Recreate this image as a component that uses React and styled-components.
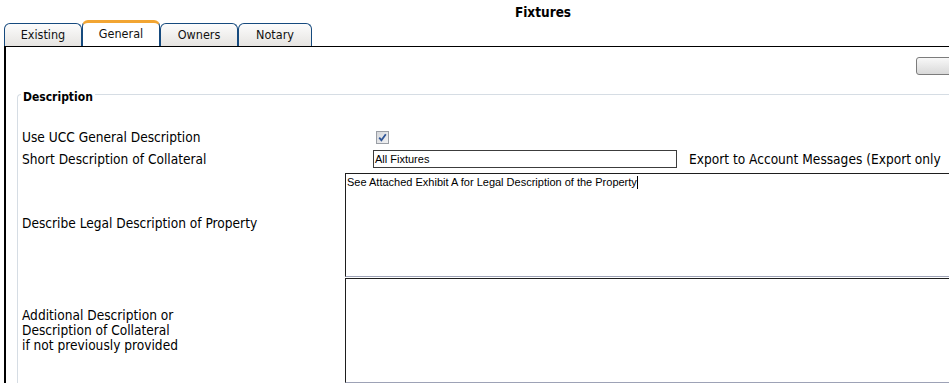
import React from 'react';
import styled, { createGlobalStyle } from 'styled-components';

const GlobalStyle = createGlobalStyle`
  html, body { margin: 0; padding: 0; background: #fff; overflow: hidden; }
  body {
    font-family: "DejaVu Sans Condensed", "DejaVu Sans", sans-serif;
    font-stretch: semi-condensed;
    color: #000;
  }
`;

const Page = styled.div`
  width: 1086px;
`;

const Title = styled.h1`
  margin: 0;
  height: 20px;
  line-height: 24px;
  text-align: center;
  font-size: 13.5px;
  font-weight: bold;
  color: #000;
`;

const TabBar = styled.div`
  display: flex;
  align-items: flex-end;
  height: 26px;
  padding-left: 4px;
`;

const Tab = styled.div`
  box-sizing: border-box;
  width: ${(p) => p.$w}px;
  height: ${(p) => (p.$active ? 26 : 23)}px;
  padding-bottom: 2px;
  border: 1px solid #164a7e;
  border-bottom: none;
  border-top: ${(p) => (p.$active ? '3px solid #f2a532' : '1px solid #164a7e')};
  border-radius: 6px 6px 0 0;
  background: ${(p) => (p.$active ? '#fff' : 'linear-gradient(#fcfcfc, #e6e4e1)')};
  font-size: 12.5px;
  display: flex;
  align-items: center;
  justify-content: center;
  color: #111;
`;

const Panel = styled.div`
  margin-left: 4px;
  border-top: 1px solid #000;
  border-left: 2px solid #000;
  padding: 10px 0 0 11px;
`;

const Toolbar = styled.div`
  display: flex;
  justify-content: flex-end;
  padding-right: 90px;
  margin-bottom: 9px;
`;

const Button = styled.button`
  box-sizing: border-box;
  width: 80px;
  height: 18px;
  border: 1px solid #7c7c7c;
  border-radius: 3px;
  background: linear-gradient(#f8f8f8, #d9d9d9);
  padding: 0;
`;

const Fieldset = styled.fieldset`
  margin: 0;
  padding: 22px 0 0 4px;
  border: 1px solid #d6dde4;
  border-right: none;
  border-bottom: none;
  border-radius: 4px 0 0 0;
  min-width: 0;
`;

const Legend = styled.legend`
  margin-left: -1px;
  padding: 6px 2px 0;
  font-size: 12px;
  font-weight: bold;
  color: #000;
`;

const FormGrid = styled.div`
  display: grid;
  grid-template-columns: 323px 1fr;
  align-items: center;
`;

const Label = styled.div`
  font-size: 13.6px;
  line-height: 15px;
  color: #000;
`;

const Field = styled.div`
  display: flex;
  align-items: center;
  min-height: 22px;
  padding-left: ${(p) => p.$ml || 0}px;
  padding-top: ${(p) => p.$mt || 0}px;
`;

const CheckBox = styled.span`
  box-sizing: border-box;
  width: 13px;
  height: 13px;
  border: 1px solid #9a9ea5;
  background: linear-gradient(135deg, #d5d7db, #f2f2f3);
  display: flex;
  align-items: center;
  justify-content: center;
`;

const TextInput = styled.div`
  box-sizing: border-box;
  width: 304px;
  height: 18px;
  border: 1px solid #3c3c3c;
  padding: 0 1px;
  font-family: "Liberation Sans", Arial, sans-serif;
  font-size: 11px;
  line-height: 16px;
  color: #000;
`;

const Note = styled.span`
  margin-left: 12px;
  font-size: 13.6px;
  white-space: nowrap;
`;

const TextArea = styled.div`
  box-sizing: border-box;
  width: 700px;
  height: ${(p) => p.$h}px;
  border: 1px solid #1e1e1e;
  border-bottom-color: #9da2b6;
  padding: 2px 1px;
  font-family: "Liberation Sans", Arial, sans-serif;
  font-size: 11px;
  line-height: 13px;
  color: #000;
`;

const Caret = styled.span`
  display: inline-block;
  width: 0;
  height: 13px;
  border-left: 1px solid #000;
  vertical-align: top;
`;

export default function App() {
  return (
    <Page>
      <GlobalStyle />
      <Title>Fixtures</Title>
      <TabBar>
        <Tab $w={78}>Existing</Tab>
        <Tab $w={78} $active>General</Tab>
        <Tab $w={78}>Owners</Tab>
        <Tab $w={74}>Notary</Tab>
      </TabBar>
      <Panel>
        <Toolbar>
          <Button aria-label="action" />
        </Toolbar>
        <Fieldset>
          <Legend>Description</Legend>
          <FormGrid>
            <Label>Use UCC General Description</Label>
            <Field $ml={31}>
              <CheckBox>
                <svg width="9" height="9" viewBox="0 0 9 9">
                  <path d="M1.2 4.6 L3.4 7.2 L7.8 1.2" fill="none" stroke="#2f5597" strokeWidth="1.8" />
                </svg>
              </CheckBox>
            </Field>

            <Label>Short Description of Collateral</Label>
            <Field $ml={28}>
              <TextInput>All Fixtures</TextInput>
              <Note>Export to Account Messages (Export only</Note>
            </Field>

            <Label>Describe Legal Description of Property</Label>
            <Field $mt={3}>
              <TextArea $h={104}>
                See Attached Exhibit A for Legal Description of the Property<Caret />
              </TextArea>
            </Field>

            <Label>
              Additional Description or<br />
              Description of Collateral<br />
              if not previously provided
            </Label>
            <Field $mt={1}>
              <TextArea $h={105} />
            </Field>
          </FormGrid>
        </Fieldset>
      </Panel>
    </Page>
  );
}
